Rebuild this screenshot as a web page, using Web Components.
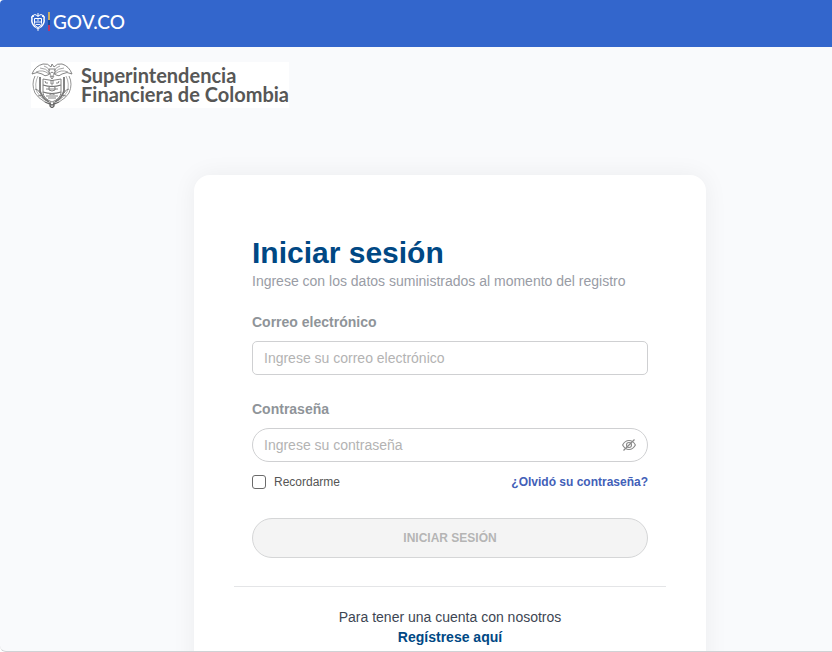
<!DOCTYPE html>
<html lang="es">
<head>
<meta charset="utf-8">
<meta name="viewport" content="width=device-width, initial-scale=1">
<title>Iniciar sesión</title>
<style>
	body {
		margin: 0;
		background: #fff;
		font-family: 'Liberation Sans', Arial, sans-serif;
		font-size: 14px;
		line-height: 20px;
	}
</style>
</head>
<body>
<app-shell>
	<gov-bar slot="top"></gov-bar>
	<entity-logo slot="brand"></entity-logo>
	<login-card>
		<h1 slot="title">Iniciar sesión</h1>
		<span slot="intro">Ingrese con los datos suministrados al momento del registro</span>
		<login-form></login-form>
		<sign-up-note slot="footer"></sign-up-note>
	</login-card>
</app-shell>

<script>
'use strict';

// small helper: register an element from its shadow markup

function define(name, html) {
	const tmpl = document.createElement('template');
	tmpl.innerHTML = html;

	window.customElements.define(
		name,
		class extends HTMLElement {
			constructor() {
				super();
				this.attachShadow({mode: 'open'});
				this.shadowRoot.appendChild(tmpl.content.cloneNode(true));
			}
		}
	);
}

// page frame

define('app-shell', `
	<style>
		:host {
			display: flex;
			flex-direction: column;
			box-sizing: border-box;
			height: 100vh;
			overflow: hidden;
			background: #f9fafc;
			border-bottom: 1px solid #d0d2d5;
			border-radius: 4px 0 0 6px;
		}

		.brand {
			padding: 15px 31px 0;
		}

		main {
			display: flex;
			justify-content: center;
			padding: 67px 0 40px 68px;
		}
	</style>
	<slot name="top"></slot>
	<div class="brand"><slot name="brand"></slot></div>
	<main><slot></slot></main>
`);

// blue government bar

define('gov-bar', `
	<style>
		:host {
			display: block;
			flex: none;
			background: #3366cc;
			color: #fff;
		}

		a {
			display: flex;
			align-items: center;
			gap: 2px;
			height: 47px;
			box-sizing: border-box;
			padding: 0 30px 3px;
			color: inherit;
			font: 500 19px/24px Lato, sans-serif;
			text-decoration: none;
		}

		svg {
			display: block;
		}
	</style>
	<a href="#" aria-label="GOV.CO">
		<svg width="21" height="20" viewBox="0 0 21 20" aria-hidden="true">
			<g fill="none" stroke="#fff">
				<path d="M4 4Q1 4 2 7q-1 4 3 8M12 4q3 0 2 3 1 4-3 8" stroke-width="1.5"/>
				<path d="M2 4q3-3 6 0 3-3 6 0M8 1v4M4.500 6.500h7v5q0 3-3.500 4-3.500-1-3.500-4z"/>
				<path d="M4 10h8M6 12.500h4M8 7v2M5 15l3 2 3-2M8 15v4" stroke-width="0.9"/>
			</g>
			<path d="M18 0h2v8h-2z" fill="#c9ae66"/>
			<path d="M18 8h2v5h-2z" fill="#164b9d"/>
			<path d="M18 13h2v6h-2z" fill="#b93468"/>
		</svg>
		<span>GOV.CO</span>
	</a>
`);

// coat of arms and name of the entity

define('entity-logo', `
	<style>
		:host {
			display: inline-flex;
			align-items: center;
			gap: 8px;
			background: #fff;
			color: #575756;
			font: 700 20px/19px Lato, sans-serif;
			vertical-align: top;
		}

		svg,
		.name span {
			display: block;
		}
	</style>
	<svg width="42" height="46" viewBox="0 0 42 46" fill="none" stroke="#777" stroke-width="0.9" aria-hidden="true">
		<path d="M1 12Q4 4 12 2q5-1 8 3l1-3 2 3q3-4 8-3 7 2 10 10"/>
		<path d="M1 12q5-3 10 0 3 3 6 1l4-3 4 3q3 2 6-1 5-3 10 0"/>
		<path d="M5 10q7-3 13 2M9 6q6 0 10 5M13 4q4 1 6 5M37 10q-7-3-13 2M33 6q-6 0-10 5M29 4q-4 1-6 5" stroke="#999"/>
		<path d="M18 7h6v4l-3 4-3-4zM19 14l2 3 2-3"/>
		<path d="M12 17q9 3 18 0v14q-1 6-9 9-8-3-9-9z"/>
		<path d="M12 23q9 3 18 0M12 30q9 3 18 0" stroke-width="1.1"/>
		<path d="M14 19q0 3 3 2M28 19q0 3-3 2M20 18v4h2v-4M15 27h12M18 25q3-2 6 0v3q-3 2-6 0zM15 34h12M17 36h8M19 33v-1h4v1"/>
		<path d="M4 14Q0 22 4 31q3 5 10 9M38 14q4 8 0 17-3 5-10 9" stroke="#888"/>
		<path d="M7 14Q3 22 6 30q3 5 9 9M35 14q4 8 1 16-3 5-9 9" stroke="#aaa"/>
		<path d="M9 15v14q2 7 9 11M33 15v14q-2 7-9 11" stroke-width="1.8" stroke="#777"/>
		<path d="M4 27q3 0 5 4M38 27q-3 0-5 4M7 34l5-1M35 34l-5-1"/>
		<path d="M14 40l7 3 7-3M19 40v4l2 2 2-2v-4" stroke="#666" stroke-width="1.3"/>
	</svg>
	<span class="name"><span>Superintendencia</span> <span>Financiera de Colombia</span></span>
`);

// white card around the form

define('login-card', `
	<style>
		:host {
			display: block;
			box-sizing: border-box;
			flex: 0 1 512px;
			padding: 60px 40px;
			background: #fff;
			border-radius: 16px;
			box-shadow: 0 0 24px rgba(0, 0, 0, 0.06);
		}

		header,
		.body {
			padding: 0 18px;
		}

		::slotted(h1) {
			margin: 0;
			color: #004884;
			font-size: 30px;
			line-height: 36px;
		}

		.intro {
			color: #999ca5;
		}

		hr {
			margin: 28px 0 20px;
			border: 0;
			border-top: 1px solid #e4e5e7;
		}
	</style>
	<header>
		<slot name="title"></slot>
		<div class="intro"><slot name="intro"></slot></div>
	</header>
	<div class="body"><slot></slot></div>
	<hr>
	<slot name="footer"></slot>
`);

define('login-form', `
	<style>
		:host {
			display: block;
		}

		label[for] {
			display: block;
			margin: 21px 0 9px;
			color: #8f9499;
			font-weight: 700;
		}

		.field {
			display: flex;
			align-items: center;
			box-sizing: border-box;
			height: 34px;
			margin-bottom: 24px;
			padding: 0 11px;
			background: #fff;
			border: 1px solid #cfd0d2;
			border-radius: 5px;
		}

		.field + label[for] {
			margin-top: 0;
		}

		.pill {
			margin-bottom: 12px;
			border-radius: 17px;
		}

		.field input {
			flex: 1;
			min-width: 0;
			padding: 0;
			border: 0;
			outline: 0;
			background: none;
			color: #333;
			font: inherit;
		}

		.field input::placeholder {
			color: #b3b3b3;
		}

		.eye {
			padding: 0;
			border: 0;
			background: none;
			cursor: pointer;
		}

		.eye svg {
			display: block;
		}

		.options {
			display: flex;
			align-items: center;
			justify-content: space-between;
			font-size: 12px;
			line-height: 16px;
		}

		.remember {
			display: flex;
			align-items: center;
			gap: 8px;
			color: #555;
		}

		.remember input {
			appearance: none;
			box-sizing: border-box;
			width: 14px;
			height: 14px;
			margin: 0;
			background: #fff;
			border: 1px solid #6b6b6b;
			border-radius: 3px;
		}

		.remember input:checked {
			background: #3366cc;
		}

		a {
			color: #4260b8;
			font-weight: 700;
			text-decoration: none;
		}

		.submit {
			display: block;
			width: 100%;
			height: 40px;
			margin-top: 28px;
			background: #f4f4f4;
			border: 1px solid #d5d6d7;
			border-radius: 20px;
			color: #b5b5b5;
			font: 700 12px/16px 'Liberation Sans', Arial, sans-serif;
		}
	</style>
	<form>
		<label for="email">Correo electrónico</label>
		<div class="field">
			<input id="email" type="email" placeholder="Ingrese su correo electrónico">
		</div>
		<label for="password">Contraseña</label>
		<div class="field pill">
			<input id="password" type="password" placeholder="Ingrese su contraseña">
			<button class="eye" type="button" aria-label="Mostrar contraseña">
				<svg width="14" height="14" viewBox="0 0 14 14" fill="none" stroke="#8a8a8a" stroke-width="1.1" aria-hidden="true">
					<path d="M0.600 7q2.400-4.500 6.400-4.500T13.400 7q-2.400 4.500-6.400 4.500T0.600 7z"/>
					<circle cx="7" cy="7" r="2.500"/>
					<path d="M1.500 12.500L12.500 1.500" stroke-width="1.2"/>
				</svg>
			</button>
		</div>
		<div class="options">
			<label class="remember"><input type="checkbox"> Recordarme</label>
			<a href="#">¿Olvidó su contraseña?</a>
		</div>
		<button class="submit" type="submit" disabled>INICIAR SESIÓN</button>
	</form>
`);

define('sign-up-note', `
	<style>
		:host {
			display: block;
			color: #3d4653;
			text-align: center;
		}

		p {
			margin: 0;
		}

		a {
			color: #004884;
			font-weight: 700;
			text-decoration: none;
		}
	</style>
	<p>Para tener una cuenta con nosotros</p>
	<a href="#">Regístrese aquí</a>
`);

// show and hide the password with the eye

const form = document.querySelector('login-form').shadowRoot;
const password = form.querySelector('#password');

form.querySelector('.eye').onclick = () => {
	password.type = password.type === 'password' ? 'text' : 'password';
};
</script>
</body>
</html>
